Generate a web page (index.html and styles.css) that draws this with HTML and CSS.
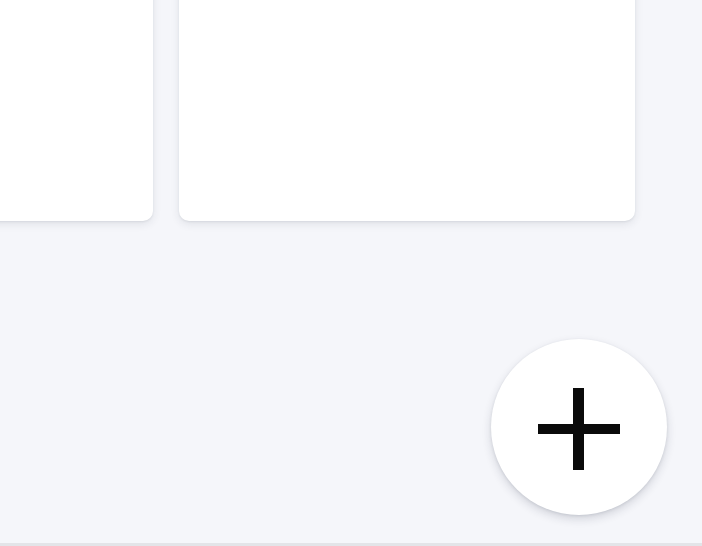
FILE: index.html
```html
<!DOCTYPE html>
<html>
<head>
<meta charset="utf-8">
<link rel="stylesheet" href="styles.css">
</head>
<body>
<div class="screen">
  <div class="cards">
    <div class="card"></div>
    <div class="card"></div>
  </div>
  <div class="spacer"></div>
  <div class="bottom-edge"></div>
  <button class="fab" aria-label="Add">
    <svg class="fab-icon" width="82" height="82" viewBox="0 0 82 82">
      <rect x="0" y="36" width="82" height="10" fill="#0a0a0a"/>
      <rect x="35" y="0" width="11" height="82" fill="#0a0a0a"/>
    </svg>
  </button>
</div>
</body>
</html>
```
FILE: styles.css
```css
html, body {
  margin: 0;
  padding: 0;
  height: 100%;
  overflow: hidden;
}
.screen {
  position: relative;
  height: 546px;
  background: #f5f6fa;
  display: flex;
  flex-direction: column;
  overflow: hidden;
}
.cards {
  display: flex;
  gap: 26px;
  margin: -30px 67px 0 -303px;
}
.card {
  flex: 1;
  height: 251px;
  background: #ffffff;
  border-radius: 10px;
  box-shadow: 0 3px 8px rgba(40, 45, 70, 0.10), 0 1px 2px rgba(40, 45, 70, 0.08);
}
.spacer {
  flex: 1;
}
.bottom-edge {
  height: 3px;
  background: #e3e4e8;
}
.fab {
  position: absolute;
  right: 35px;
  bottom: 31px;
  width: 176px;
  height: 176px;
  border-radius: 50%;
  border: none;
  padding: 0;
  background: #ffffff;
  box-shadow: 0 4px 10px rgba(30, 35, 60, 0.16), 0 1px 3px rgba(30, 35, 60, 0.10);
  display: flex;
  align-items: center;
  justify-content: center;
}
.fab-icon {
  margin-top: 4px;
}
```
